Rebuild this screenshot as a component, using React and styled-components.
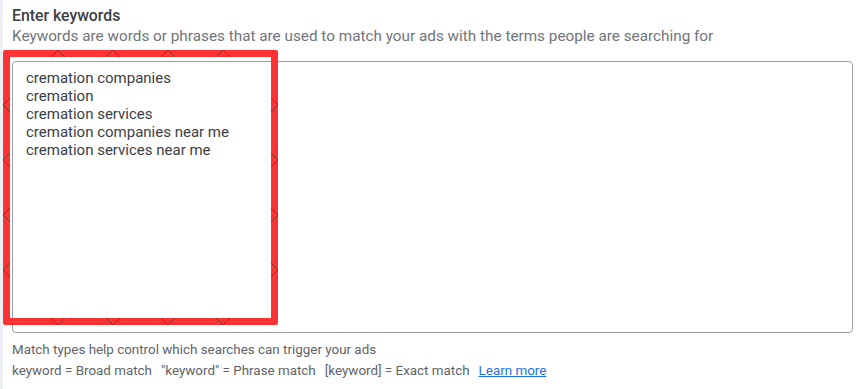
import React from 'react';
import styled, { createGlobalStyle } from 'styled-components';

const GlobalStyle = createGlobalStyle`
  html, body {
    margin: 0;
    padding: 0;
    background: #ffffff;
  }
  body {
    font-family: Roboto, "Noto Sans", Arial, sans-serif;
    -webkit-font-smoothing: antialiased;
  }
`;

const keywords = [
  'cremation companies',
  'cremation',
  'cremation services',
  'cremation companies near me',
  'cremation services near me',
];

const matchTypes = [
  'keyword = Broad match',
  '"keyword" = Phrase match',
  '[keyword] = Exact match',
];

const Page = styled.div`
  position: relative;
  display: flex;
  width: 860px;
  height: 389px;
  overflow: hidden;
`;

const EdgeStrip = styled.div`
  width: 3px;
  flex: none;
  background: #eceff4;
`;

const Section = styled.div`
  flex: 1;
  padding: 6px 7px 0 9px;
  display: flex;
  flex-direction: column;
`;

const Title = styled.div`
  font-size: 15.8px;
  font-weight: 500;
  line-height: 20px;
  color: #3c4043;
`;

const Subtitle = styled.div`
  font-size: 15.3px;
  line-height: 20px;
  color: #70757a;
  white-space: nowrap;
`;

const KeywordBox = styled.textarea`
  margin-top: 15px;
  box-sizing: border-box;
  width: 100%;
  height: 272px;
  padding: 7px 13px;
  border: 1px solid #9aa0a6;
  border-radius: 4px;
  resize: none;
  outline: none;
  font-family: Roboto, "Noto Sans", Arial, sans-serif;
  font-size: 15px;
  line-height: 18px;
  color: #3c4043;
  background: #fff;
`;

const Hint = styled.div`
  margin-top: ${(p) => p.$gap}px;
  display: flex;
  gap: 9px;
  font-size: 13.4px;
  line-height: 20px;
  color: #5f6368;
  white-space: pre;
`;

const LearnMore = styled.a`
  color: #1a73e8;
  text-decoration: underline;
  cursor: pointer;
`;

const Highlight = styled.div`
  position: absolute;
  left: 3px;
  top: 50px;
  width: 275px;
  height: 275px;
  box-sizing: border-box;
  border: 7px solid #ff3333;
  border-radius: 2px;
  pointer-events: none;
`;

const Handles = styled.svg`
  position: absolute;
  left: -7px;
  top: -7px;
  overflow: visible;
`;

const HandleMarks = () => {
  const size = 275;
  const stops = [55, 110, 165, 220];
  const d = [];
  stops.forEach((s) => {
    d.push(`M${s - 7} 7 L${s} 0 L${s + 7} 7`);
    d.push(`M${s - 7} ${size - 7} L${s} ${size} L${s + 7} ${size - 7}`);
    d.push(`M7 ${s - 7} L0 ${s} L7 ${s + 7}`);
    d.push(`M${size - 7} ${s - 7} L${size} ${s} L${size - 7} ${s + 7}`);
  });
  return (
    <Handles width={size} height={size} viewBox={`0 0 ${size} ${size}`}>
      <path d={d.join(' ')} fill="none" stroke="#7a1f1f" strokeWidth="0.9" opacity="0.8" />
    </Handles>
  );
};

export default function App() {
  return (
    <>
      <GlobalStyle />
      <Page>
        <EdgeStrip />
        <Section>
          <Title>Enter keywords</Title>
          <Subtitle>
            Keywords are words or phrases that are used to match your ads with the terms people are searching for
          </Subtitle>
          <KeywordBox defaultValue={keywords.join('\n')} spellCheck={false} />
          <Hint $gap={7}>Match types help control which searches can trigger your ads</Hint>
          <Hint $gap={1}>
            {matchTypes.map((m) => (
              <span key={m}>{m}</span>
            ))}
            <LearnMore>Learn more</LearnMore>
          </Hint>
        </Section>
        <Highlight>
          <HandleMarks />
        </Highlight>
      </Page>
    </>
  );
}
